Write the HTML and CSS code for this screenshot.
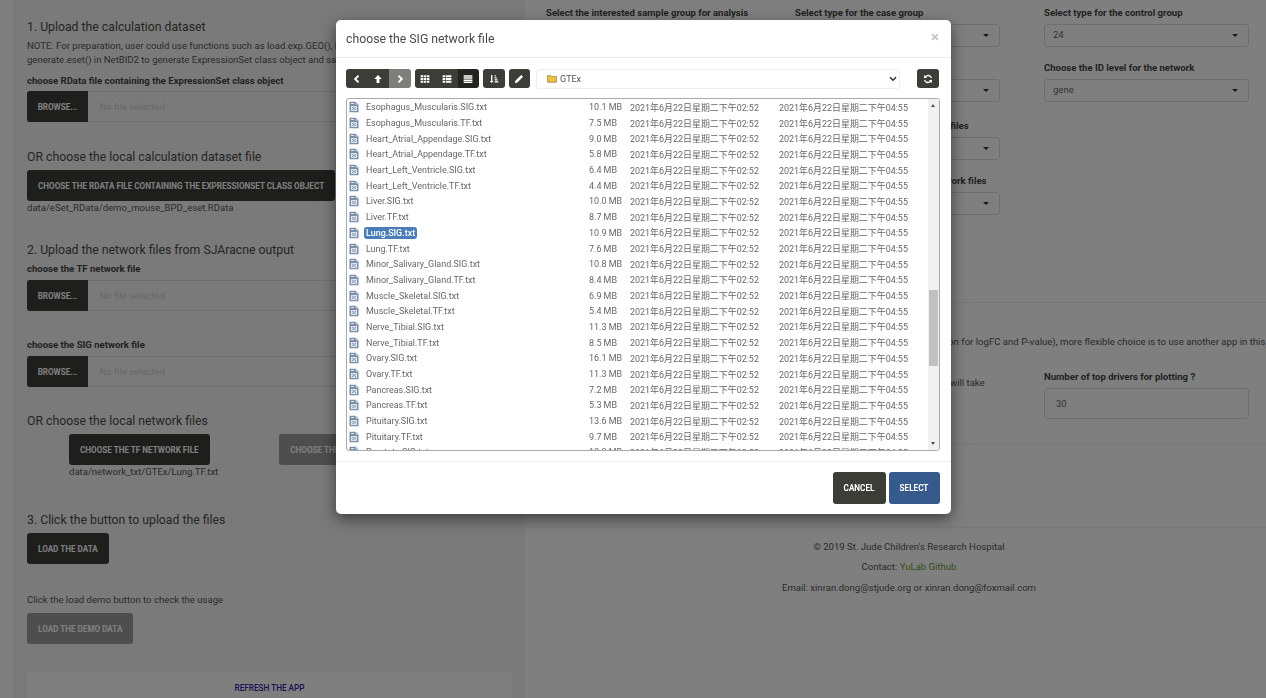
FILE: index.html
```html
<!DOCTYPE html>
<html lang="en">
<head>
    <meta charset="UTF-8">
    <meta name="viewport" content="width=device-width, initial-scale=1.0">
    <title>NetBID2 data loader</title>
    <link rel="stylesheet" href="styles.css">
</head>
<body>
    <svg class="sprite" width="0" height="0">
        <symbol id="i-file" viewBox="0 0 10 12">
            <path d="M0.5 0.8h6.2l2.8 2.8v7.6h-9z" fill="#7b8ea8"/>
            <path d="M6.7 0.8v2.8h2.8z" fill="#c3d0e0"/>
            <path d="M2 2h3v1H2zM2 5h6v5H2z" fill="#dfe6ef"/>
            <path d="M3 6l4 3M7 6l-4 3" stroke="#7b8ea8" stroke-width=".9"/>
        </symbol>
        <symbol id="i-left" viewBox="0 0 16 16"><path d="M10.5 2.5L5 8l5.5 5.5" fill="none" stroke="currentColor" stroke-width="3"/></symbol>
        <symbol id="i-right" viewBox="0 0 16 16"><path d="M5.5 2.5L11 8l-5.5 5.5" fill="none" stroke="currentColor" stroke-width="3"/></symbol>
        <symbol id="i-up" viewBox="0 0 16 16"><path d="M8 1.5L14 8h-3.7v6.5H5.7V8H2z" fill="currentColor"/></symbol>
        <symbol id="i-th" viewBox="0 0 16 16"><path d="M1 2h4v3.2H1zM6 2h4v3.2H6zM11 2h4v3.2h-4zM1 6.4h4v3.2H1zM6 6.4h4v3.2H6zM11 6.4h4v3.2h-4zM1 10.8h4V14H1zM6 10.8h4V14H6zM11 10.8h4V14h-4z" fill="currentColor"/></symbol>
        <symbol id="i-list" viewBox="0 0 16 16"><path d="M1 2h4v3.2H1zM6 2h9v3.2H6zM1 6.4h4v3.2H1zM6 6.4h9v3.2H6zM1 10.8h4V14H1zM6 10.8h9V14H6z" fill="currentColor"/></symbol>
        <symbol id="i-lines" viewBox="0 0 16 16"><path d="M1 2h14v2.4H1zM1 5.3h14v2.4H1zM1 8.6h14V11H1zM1 11.9h14v2.4H1z" fill="currentColor"/></symbol>
        <symbol id="i-sort" viewBox="0 0 16 16"><path d="M3.2 1.5h2.2v9.5h2L4.3 14.5 1.2 11h2zM9 2h2v2H9zM9 5.2h3.4v2H9zM9 8.4h4.7v2H9zM9 11.6h6v2H9z" fill="currentColor"/></symbol>
        <symbol id="i-pencil" viewBox="0 0 16 16"><path d="M11.5 1.5l3 3-9 9-4.2 1.2 1.2-4.2z" fill="currentColor"/></symbol>
        <symbol id="i-refresh" viewBox="0 0 16 16"><path d="M13.4 6.2A5.6 5.6 0 0 0 3.6 4.6M2.6 9.8a5.6 5.6 0 0 0 9.8 1.6" fill="none" stroke="currentColor" stroke-width="2.3"/><path d="M1.5 1.7l.3 5.1 4.9-.9zM14.5 14.3l-.3-5.1-4.9.9z" fill="currentColor"/></symbol>
        <symbol id="i-folder" viewBox="0 0 12 10"><path d="M.5 1.5h4l1 1.2h6v6.8h-11z" fill="#f0c040" stroke="#8a7a4a" stroke-width=".8"/></symbol>
        <symbol id="i-chevron" viewBox="0 0 8 6"><path d="M1 1.2L4 4.2 7 1.2" fill="none" stroke="currentColor" stroke-width="1.6"/></symbol>
    </svg>

    <div class="page">
        <div class="well">
            <h4 class="title">1. Upload the calculation dataset</h4>
            <p class="note">NOTE: For preparation, user could use functions such as load.exp.GEO(), load.exp.just(),<br>generate.eset() in NetBID2 to generate ExpressionSet class object and save it as RData.</p>
            <div class="label">choose RData file containing the ExpressionSet class object</div>
            <div class="file-input"><span class="btn browse">Browse...</span><span class="no-file">No file selected</span></div>

            <h4 class="title title-gap">OR choose the local calculation dataset file</h4>
            <div class="action"><button class="btn">Choose the RData file containing the ExpressionSet class object</button></div>
            <div class="path">data/eSet_RData/demo_mouse_BPD_eset.RData</div>

            <h4 class="title title-wide">2. Upload the network files from SJAracne output</h4>
            <div class="label label-tight">choose the TF network file</div>
            <div class="file-input"><span class="btn browse">Browse...</span><span class="no-file">No file selected</span></div>
            <div class="label label-gap">choose the SIG network file</div>
            <div class="file-input"><span class="btn browse">Browse...</span><span class="no-file">No file selected</span></div>

            <h4 class="title title-gap2">OR choose the local network files</h4>
            <div class="net-row">
                <div class="net-col">
                    <button class="btn">Choose the TF network file</button>
                    <div class="path">data/network_txt/GTEx/Lung.TF.txt</div>
                </div>
                <div class="net-col">
                    <button class="btn btn-off">Choose the SIG network file</button>
                </div>
            </div>

            <h4 class="title title-step">3. Click the button to upload the files</h4>
            <div class="action"><button class="btn">Load the data</button></div>
            <p class="demo-text">Click the load demo button to check the usage</p>
            <div class="action action-flush"><button class="btn btn-off">Load the demo data</button></div>
            <div class="refresh-panel"><a class="refresh-link">REFRESH THE APP</a></div>
        </div>

        <div class="main">
            <div class="fields">
                <div class="field"><div class="label">Select the interested sample group for analysis</div><div class="sel"></div></div>
                <div class="field"><div class="label">Select type for the case group</div><div class="sel"></div></div>
                <div class="field"><div class="label">Select type for the control group</div><div class="sel">24</div></div>
                <div class="field"><div class="label">Choose the sample type</div><div class="sel"></div></div>
                <div class="field"><div class="label">Choose the network type</div><div class="sel"></div></div>
                <div class="field"><div class="label">Choose the ID level for the network</div><div class="sel">gene</div></div>
            </div>
            <div class="fields fields-low">
                <div class="field"></div>
                <div class="field"><div class="label">Choose the cancer type for the data files</div><div class="sel"></div></div>
                <div class="field"></div>
                <div class="field"></div>
                <div class="field"><div class="label">Choose the tissue types for the network files</div><div class="sel"></div></div>
                <div class="field"></div>
            </div>
            <hr class="rule rule-a">
            <p class="long-note">The app only offers the basic volcano plot and heatmap plots with a fixed cut-off (a default option for logFC and P-value), more flexible choice is to use another app in this</p>
            <div class="fields fields-plot">
                <div class="field"></div>
                <div class="field"><p class="wait-note">Plotting the larger number of drivers will take</p></div>
                <div class="field"><div class="label">Number of top drivers for plotting ?</div><div class="num">30</div></div>
            </div>
            <hr class="rule rule-b">
            <hr class="rule rule-c">
            <div class="credits">
                <p>© 2019 St. Jude Children's Research Hospital</p>
                <p>Contact: <a class="credit-link">YuLab Github</a></p>
                <p>Email: xinran.dong@stjude.org or xinran.dong@foxmail.com</p>
            </div>
        </div>
    </div>

    <div class="backdrop"></div>

    <div class="modal">
        <div class="modal-head">
            <span class="modal-title">choose the SIG network file</span>
            <span class="close">×</span>
        </div>
        <div class="modal-body">
            <div class="toolbar">
                <div class="btn-group">
                    <span class="tool"><svg><use href="#i-left"/></svg></span>
                    <span class="tool"><svg><use href="#i-up"/></svg></span>
                    <span class="tool tool-off"><svg><use href="#i-right"/></svg></span>
                </div>
                <div class="btn-group">
                    <span class="tool"><svg><use href="#i-th"/></svg></span>
                    <span class="tool"><svg><use href="#i-list"/></svg></span>
                    <span class="tool tool-on"><svg><use href="#i-lines"/></svg></span>
                </div>
                <span class="tool tool-solo"><svg><use href="#i-sort"/></svg></span>
                <span class="tool tool-solo"><svg><use href="#i-pencil"/></svg></span>
                <div class="dir">
                    <svg class="dir-icon"><use href="#i-folder"/></svg>
                    <select class="dir-select"><option>GTEx</option></select>
                    <svg class="dir-chevron"><use href="#i-chevron"/></svg>
                </div>
                <span class="tool tool-solo tool-refresh"><svg><use href="#i-refresh"/></svg></span>
            </div>

            <div class="files">
                <div class="rows">
                    <div class="row"><svg class="file-icon"><use href="#i-file"/></svg><span class="name">Esophagus_Muscularis.SIG.txt</span><span>10.1 MB</span><span>2021年6月22日星期二下午02:52</span><span>2021年6月22日星期二下午04:55</span></div>
                    <div class="row"><svg class="file-icon"><use href="#i-file"/></svg><span class="name">Esophagus_Muscularis.TF.txt</span><span>7.5 MB</span><span>2021年6月22日星期二下午02:52</span><span>2021年6月22日星期二下午04:55</span></div>
                    <div class="row"><svg class="file-icon"><use href="#i-file"/></svg><span class="name">Heart_Atrial_Appendage.SIG.txt</span><span>9.0 MB</span><span>2021年6月22日星期二下午02:52</span><span>2021年6月22日星期二下午04:55</span></div>
                    <div class="row"><svg class="file-icon"><use href="#i-file"/></svg><span class="name">Heart_Atrial_Appendage.TF.txt</span><span>5.8 MB</span><span>2021年6月22日星期二下午02:52</span><span>2021年6月22日星期二下午04:55</span></div>
                    <div class="row"><svg class="file-icon"><use href="#i-file"/></svg><span class="name">Heart_Left_Ventricle.SIG.txt</span><span>6.4 MB</span><span>2021年6月22日星期二下午02:52</span><span>2021年6月22日星期二下午04:55</span></div>
                    <div class="row"><svg class="file-icon"><use href="#i-file"/></svg><span class="name">Heart_Left_Ventricle.TF.txt</span><span>4.4 MB</span><span>2021年6月22日星期二下午02:52</span><span>2021年6月22日星期二下午04:55</span></div>
                    <div class="row"><svg class="file-icon"><use href="#i-file"/></svg><span class="name">Liver.SIG.txt</span><span>10.0 MB</span><span>2021年6月22日星期二下午02:52</span><span>2021年6月22日星期二下午04:55</span></div>
                    <div class="row"><svg class="file-icon"><use href="#i-file"/></svg><span class="name">Liver.TF.txt</span><span>8.7 MB</span><span>2021年6月22日星期二下午02:52</span><span>2021年6月22日星期二下午04:55</span></div>
                    <div class="row"><svg class="file-icon"><use href="#i-file"/></svg><span class="name"><b class="picked">Lung.SIG.txt</b></span><span>10.9 MB</span><span>2021年6月22日星期二下午02:52</span><span>2021年6月22日星期二下午04:55</span></div>
                    <div class="row"><svg class="file-icon"><use href="#i-file"/></svg><span class="name">Lung.TF.txt</span><span>7.6 MB</span><span>2021年6月22日星期二下午02:52</span><span>2021年6月22日星期二下午04:55</span></div>
                    <div class="row"><svg class="file-icon"><use href="#i-file"/></svg><span class="name">Minor_Salivary_Gland.SIG.txt</span><span>10.8 MB</span><span>2021年6月22日星期二下午02:52</span><span>2021年6月22日星期二下午04:55</span></div>
                    <div class="row"><svg class="file-icon"><use href="#i-file"/></svg><span class="name">Minor_Salivary_Gland.TF.txt</span><span>8.4 MB</span><span>2021年6月22日星期二下午02:52</span><span>2021年6月22日星期二下午04:55</span></div>
                    <div class="row"><svg class="file-icon"><use href="#i-file"/></svg><span class="name">Muscle_Skeletal.SIG.txt</span><span>6.9 MB</span><span>2021年6月22日星期二下午02:52</span><span>2021年6月22日星期二下午04:55</span></div>
                    <div class="row"><svg class="file-icon"><use href="#i-file"/></svg><span class="name">Muscle_Skeletal.TF.txt</span><span>5.4 MB</span><span>2021年6月22日星期二下午02:52</span><span>2021年6月22日星期二下午04:55</span></div>
                    <div class="row"><svg class="file-icon"><use href="#i-file"/></svg><span class="name">Nerve_Tibial.SIG.txt</span><span>11.3 MB</span><span>2021年6月22日星期二下午02:52</span><span>2021年6月22日星期二下午04:55</span></div>
                    <div class="row"><svg class="file-icon"><use href="#i-file"/></svg><span class="name">Nerve_Tibial.TF.txt</span><span>8.5 MB</span><span>2021年6月22日星期二下午02:52</span><span>2021年6月22日星期二下午04:55</span></div>
                    <div class="row"><svg class="file-icon"><use href="#i-file"/></svg><span class="name">Ovary.SIG.txt</span><span>16.1 MB</span><span>2021年6月22日星期二下午02:52</span><span>2021年6月22日星期二下午04:55</span></div>
                    <div class="row"><svg class="file-icon"><use href="#i-file"/></svg><span class="name">Ovary.TF.txt</span><span>11.3 MB</span><span>2021年6月22日星期二下午02:52</span><span>2021年6月22日星期二下午04:55</span></div>
                    <div class="row"><svg class="file-icon"><use href="#i-file"/></svg><span class="name">Pancreas.SIG.txt</span><span>7.2 MB</span><span>2021年6月22日星期二下午02:52</span><span>2021年6月22日星期二下午04:55</span></div>
                    <div class="row"><svg class="file-icon"><use href="#i-file"/></svg><span class="name">Pancreas.TF.txt</span><span>5.3 MB</span><span>2021年6月22日星期二下午02:52</span><span>2021年6月22日星期二下午04:55</span></div>
                    <div class="row"><svg class="file-icon"><use href="#i-file"/></svg><span class="name">Pituitary.SIG.txt</span><span>13.6 MB</span><span>2021年6月22日星期二下午02:52</span><span>2021年6月22日星期二下午04:55</span></div>
                    <div class="row"><svg class="file-icon"><use href="#i-file"/></svg><span class="name">Pituitary.TF.txt</span><span>9.7 MB</span><span>2021年6月22日星期二下午02:52</span><span>2021年6月22日星期二下午04:55</span></div>
                    <div class="row"><svg class="file-icon"><use href="#i-file"/></svg><span class="name">Prostate.SIG.txt</span><span>10.3 MB</span><span>2021年6月22日星期二下午02:52</span><span>2021年6月22日星期二下午04:55</span></div>
                </div>
                <div class="scrollbar">
                    <span class="arrow arrow-up"></span>
                    <span class="thumb"></span>
                    <span class="arrow arrow-down"></span>
                </div>
            </div>
        </div>
        <div class="modal-foot">
            <button class="btn btn-foot">Cancel</button>
            <button class="btn btn-foot btn-primary">Select</button>
        </div>
    </div>
</body>
</html>
```

FILE: styles.css
```css
* {
    box-sizing: border-box;
}

html, body {
    margin: 0;
    padding: 0;
    height: 100%;
    overflow: hidden;
    background: #fff;
    color: #555;
    font-family: Roboto, "Noto Sans CJK SC", sans-serif;
    font-size: 9.55px;
}

.sprite {
    position: absolute;
}

.page {
    display: grid;
    grid-template-columns: 525px 1fr;
    height: 698px;
    overflow: hidden;
}

/* left panel */
.well {
    margin-left: 13px;
    padding: 19px 13px 0 14px;
    background: #f5f5f5;
}

.title {
    margin: 0 0 -1px;
    padding-top: 1px;
    color: #4a4a4a;
    font-size: 12.25px;
    font-weight: 400;
    line-height: 14px;
    white-space: nowrap;
}

.title-gap { margin-top: 27px; }
.title-wide { margin-top: 29px; }
.title-gap2 { margin-top: 26px; }
.title-step { margin-top: 35px; }

.note {
    margin: 6px 0 0;
    line-height: 14px;
    height: 28px;
    white-space: nowrap;
    overflow: hidden;
}

.label {
    margin: 6px 0 -1px;
    padding-top: 1px;
    color: #444;
    font-weight: 700;
    line-height: 14px;
    white-space: nowrap;
}

.label-tight { margin-top: 5px; }
.label-gap { margin-top: 26px; }

.file-input {
    display: flex;
    align-items: center;
    margin-top: 4px;
    height: 31px;
    border-top: 1px solid #ddd;
    border-bottom: 1px solid #ddd;
}

.label-tight + .file-input,
.label-gap + .file-input {
    margin-top: 5px;
}

.no-file {
    margin-left: 11.5px;
    color: #d0d0d0;
}

.btn {
    display: inline-flex;
    align-items: center;
    justify-content: center;
    height: 31px;
    padding: 0 11px;
    border: 0;
    border-radius: 3px;
    background: #3d3d38;
    color: #fff;
    font-family: inherit;
    font-size: 8.15px;
    font-weight: 700;
    text-transform: uppercase;
    white-space: nowrap;
}

.browse {
    width: 61px;
    height: 31px;
    margin: -1px 0;
    border-radius: 3px 0 0 3px;
}

.btn-off {
    background: #9c9c9c;
}

.action {
    display: flex;
    margin-top: 7px;
}

.action-flush {
    margin-top: 0;
}

.path {
    padding-top: 1px;
    height: 12px;
    line-height: 12px;
    white-space: nowrap;
}

.net-row {
    display: flex;
    gap: 61px;
    margin-top: 7px;
    padding-left: 42px;
}

.demo-text {
    margin: 29px 0 6px;
    line-height: 14px;
}

.refresh-panel {
    margin-top: 28px;
    height: 40px;
    padding-top: 10px;
    background: #fff;
    text-align: center;
}

.refresh-link {
    color: #3322aa;
    font-size: 8.2px;
    font-weight: 500;
}

/* right side */
.main {
    min-width: 0;
    padding-top: 5px;
}

.fields {
    display: grid;
    grid-template-columns: repeat(3, 205px);
    gap: 13.5px 44px;
    padding-left: 21px;
}

.fields-low {
    margin-top: 16.5px;
}

.field .label {
    margin: 0 0 4px;
}

.sel {
    position: relative;
    height: 22.5px;
    padding-left: 8px;
    border: 1px solid #ddd;
    border-radius: 3px;
    color: #666;
    line-height: 20px;
}

.sel::after {
    content: "";
    position: absolute;
    top: 9px;
    right: 10px;
    border-style: solid;
    border-width: 3px 3.5px 0;
    border-color: #333 transparent transparent;
}

.rule {
    height: 0;
    margin: 0;
    border: 0;
    border-top: 1px solid #f0f0f0;
}

.rule-a { margin-top: 87.5px; }
.rule-b { margin-top: 24px; }
.rule-c { margin-top: 83px; }

.long-note {
    margin: 32px 0 0 20px;
    font-size: 9.6px;
    line-height: 14px;
    white-space: nowrap;
}

.fields-plot {
    margin-top: 20px;
}

.wait-note {
    margin: 7px 0 0;
    line-height: 14px;
    white-space: nowrap;
}

.num {
    width: 205px;
    height: 31px;
    padding-left: 11px;
    border: 1px solid #ddd;
    border-radius: 3px;
    color: #666;
    line-height: 29px;
}

.credits {
    margin-top: 12px;
    padding-left: 27px;
    text-align: center;
}

.credits p {
    margin: 0 0 6.4px;
    line-height: 14px;
}

.credit-link {
    color: #6b9a3a;
}

/* dialog */
.backdrop {
    position: fixed;
    inset: 0;
    background: rgba(0, 0, 0, .5);
}

.modal {
    position: absolute;
    top: 20px;
    left: 336px;
    display: flex;
    flex-direction: column;
    width: 614.5px;
    height: 494px;
    border-radius: 5px;
    background: #fff;
    box-shadow: 0 5px 15px rgba(0, 0, 0, .5);
}

.modal-head {
    display: flex;
    align-items: center;
    justify-content: space-between;
    height: 38px;
    padding: 0 11.5px 0 10px;
    border-bottom: 1px solid #eee;
}

.modal-title {
    color: #4a4a4a;
    font-size: 12.25px;
}

.close {
    margin-top: -3px;
    color: #c4c4c4;
    font-size: 15px;
    font-weight: 700;
}

.modal-body {
    padding: 11px 11px 10px 10px;
    border-bottom: 1px solid #eee;
}

.toolbar {
    display: flex;
    gap: 4px;
    height: 20px;
}

.btn-group {
    display: flex;
    border-radius: 3px;
    overflow: hidden;
    height: 19px;
}

.tool {
    display: flex;
    align-items: center;
    justify-content: center;
    width: 21.5px;
    height: 19px;
    background: #3d3d38;
    color: #fff;
}

.tool svg {
    width: 10px;
    height: 10px;
}

.tool-off {
    background: #7e7e7a;
}

.tool-on {
    background: #232320;
}

.tool-solo {
    border-radius: 3px;
}

.tool-refresh {
    width: 22px;
    margin-left: 13px;
}

.dir {
    position: relative;
    width: 364px;
    height: 20px;
    margin-left: 2px;
}

.dir-icon {
    position: absolute;
    top: 5px;
    left: 11px;
    width: 10px;
    height: 9px;
}

.dir-chevron {
    position: absolute;
    top: 7px;
    right: 3px;
    width: 8px;
    height: 6px;
    color: #333;
}

.dir-select {
    width: 100%;
    height: 20px;
    padding-left: 23px;
    border: 1px solid #eee;
    border-radius: 3px;
    background: #fff;
    color: #555;
    font-family: inherit;
    font-size: 9px;
    appearance: none;
}

.files {
    position: relative;
    height: 353px;
    margin-top: 9px;
    border: 1px solid #aaa;
    border-radius: 3px;
    overflow: hidden;
}

.rows {
    padding: .5px 0 0 2px;
}

.row {
    display: grid;
    grid-template-columns: 17px 223px 41px 149px 1fr;
    align-items: center;
    height: 15.7px;
    color: #666;
    font-size: 8.95px;
    white-space: nowrap;
}

.file-icon {
    width: 10px;
    height: 12px;
}

.picked {
    padding: 1px 2px;
    margin-left: -2px;
    border-radius: 3px;
    background: #4a7db8;
    color: #fff;
    font-weight: 500;
}

.scrollbar {
    position: absolute;
    top: 0;
    right: 0;
    bottom: 0;
    width: 11px;
    background: #f1f1f1;
}

.thumb {
    position: absolute;
    top: 191px;
    left: 1px;
    width: 9px;
    height: 76px;
    background: #c1c1c1;
}

.arrow {
    position: absolute;
    left: 3px;
    border-style: solid;
    border-color: transparent;
}

.arrow-up {
    top: 5px;
    border-width: 0 2.5px 3px;
    border-bottom-color: #505050;
}

.arrow-down {
    bottom: 5px;
    border-width: 3px 2.5px 0;
    border-top-color: #505050;
}

.modal-foot {
    display: flex;
    justify-content: flex-end;
    gap: 3px;
    padding: 10px 11px 0 0;
}

.btn-foot {
    height: 32px;
    padding: 0;
    width: 53px;
}

.btn-primary {
    width: 51px;
    background: #375a8c;
}
```
